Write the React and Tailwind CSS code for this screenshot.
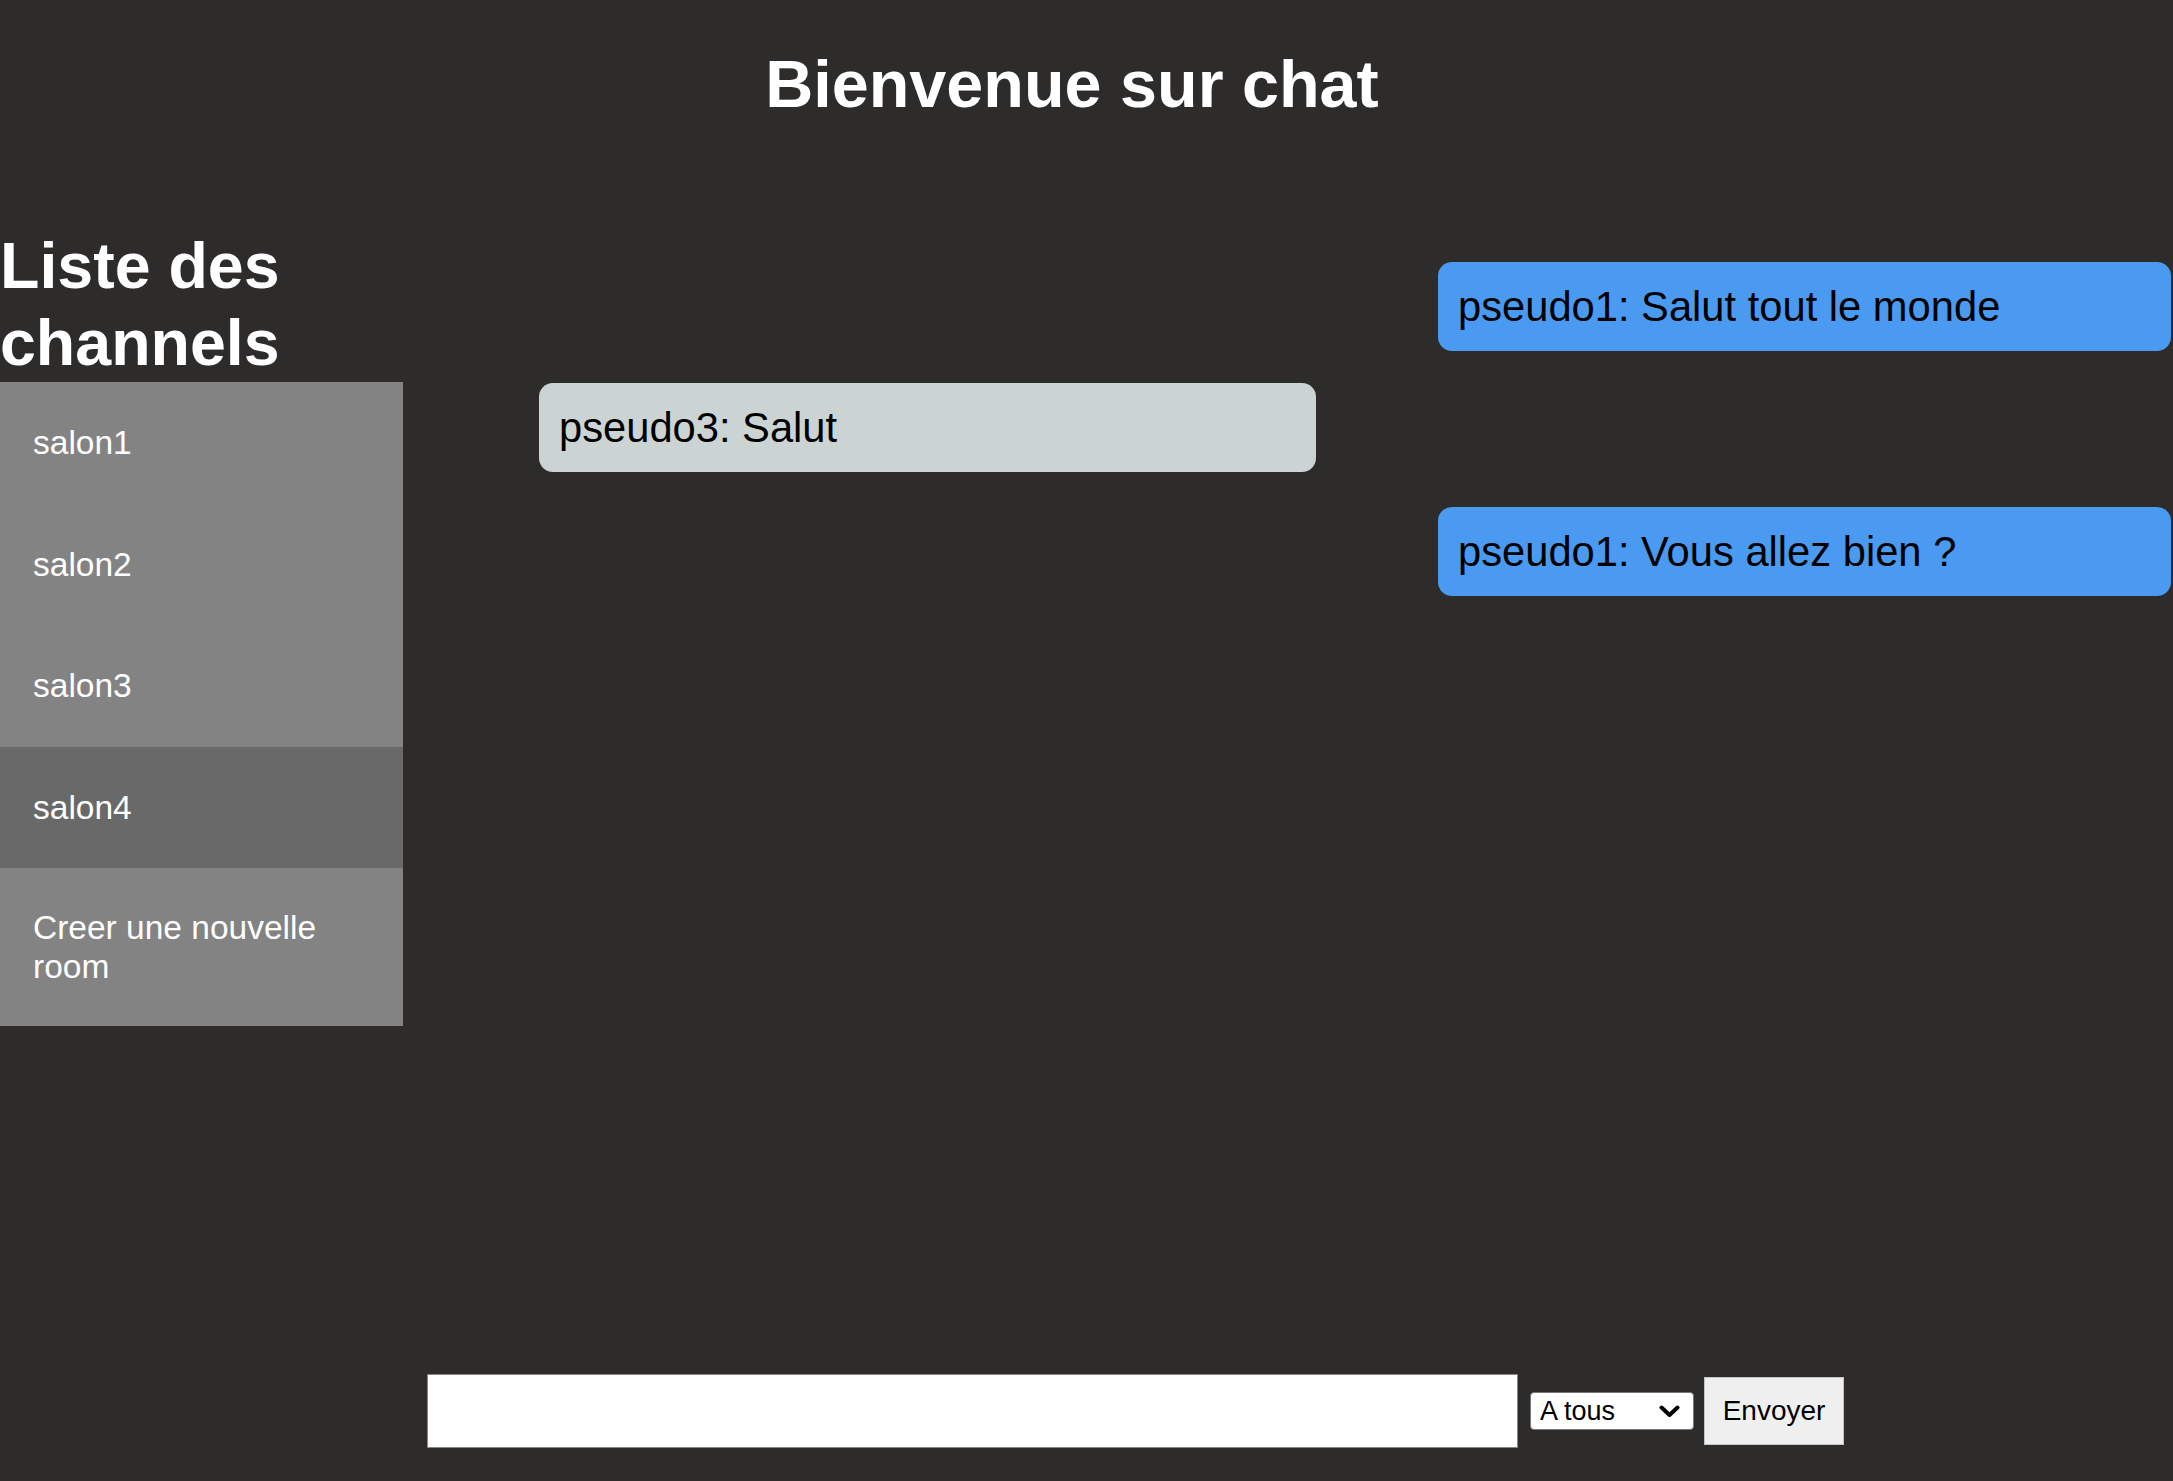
import React from "react";

export default function App() {
  const channels = ["salon1", "salon2", "salon3", "salon4"];
  return (
    <div className="h-[1481px] w-full overflow-hidden bg-[#2e2b2b] flex flex-col font-['Liberation_Sans',Arial,sans-serif]">
      <h1 className="mt-[46px] pr-[29px] text-center text-[66.5px] leading-[77px] font-bold text-white">
        Bienvenue sur chat
      </h1>

      <div className="flex flex-1">
        <aside className="mt-[105px] w-[403px] shrink-0">
          <h2 className="text-[64.5px] leading-[77px] font-bold text-white">
            Liste des channels
          </h2>
          <ul className="bg-[#838383]">
            {channels.map((c) => (
              <li
                key={c}
                className={
                  c === "salon4"
                    ? "bg-[#696969] py-[41px] pl-[33px] pr-[33px] text-[33.5px] leading-[39.5px] text-white"
                    : "py-[41px] pl-[33px] pr-[33px] text-[33.5px] leading-[39.5px] text-white"
                }
              >
                {c}
              </li>
            ))}
            <li className="py-[40px] pl-[33px] pr-[33px] text-[33.5px] leading-[39px] text-white">
              Creer une nouvelle room
            </li>
          </ul>
        </aside>

        <main className="flex flex-1 flex-col pt-[139px]">
          <div className="mr-[2px] w-[733px] self-end rounded-[14px] bg-[#4a9af1] px-[20px] py-[21px] text-[41.7px] leading-[47px] text-black">
            pseudo1: Salut tout le monde
          </div>
          <div className="ml-[136px] mt-[32px] w-[777px] rounded-[14px] bg-[#cbd3d3] px-[20px] py-[21px] text-[41.7px] leading-[47px] text-black">
            pseudo3: Salut
          </div>
          <div className="mr-[2px] mt-[35px] w-[733px] self-end rounded-[14px] bg-[#4a9af1] px-[20px] py-[21px] text-[41.7px] leading-[47px] text-black">
            pseudo1: Vous allez bien ?
          </div>
        </main>
      </div>

      <form
        className="mb-[33px] flex items-center pl-[427px]"
        onSubmit={(e) => e.preventDefault()}
      >
        <input
          type="text"
          className="h-[74px] w-[1091px] border border-[#858585] bg-white outline-none"
        />
        <div className="relative ml-[12px]">
          <select className="h-[38px] w-[164px] appearance-none rounded-[4px] border border-[#767676] bg-white pl-[9px] text-[27px] leading-[30px] text-black outline-none">
            <option>A tous</option>
          </select>
          <svg
            className="pointer-events-none absolute left-[129px] top-[13px]"
            width="21"
            height="13"
            viewBox="0 0 21 13"
          >
            <path
              d="M2.5 2.5 L10.5 10 L18.5 2.5"
              fill="none"
              stroke="#000"
              strokeWidth="4"
              strokeLinecap="round"
              strokeLinejoin="round"
            />
          </svg>
        </div>
        <button
          type="submit"
          className="ml-[10px] h-[68px] w-[140px] border border-[#c4c4c4] bg-[#efefef] text-[28px] text-black"
        >
          Envoyer
        </button>
      </form>
    </div>
  );
}
